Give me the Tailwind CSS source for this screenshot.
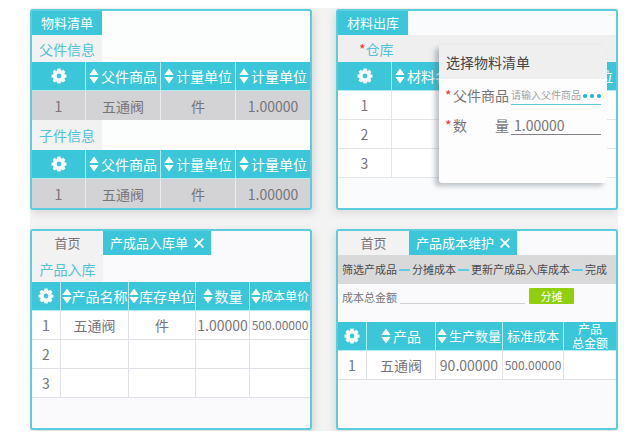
<!DOCTYPE html>
<html lang="zh-CN">
<head>
    <meta charset="UTF-8">
    <meta name="viewport" content="width=device-width, initial-scale=1.0">
    <title>物料管理</title>
    <script src="https://cdn.jsdelivr.net/npm/@tailwindcss/browser@4"></script>
</head>
<body class="bg-white font-['Noto_Sans_CJK_SC',sans-serif] text-sm text-[#77757a]">

<!-- 图标 -->
<svg class="hidden">
    <symbol id="gear" viewBox="0 0 16 16">
        <path fill="currentColor" fill-rule="evenodd" d="M6 2.400 6.400.500h3.200L10 2.400l.8.4 1.600-1.100 2.100 2.200-1.100 1.600.4.900 1.700.3v2.800l-1.700.3-.4.900 1.100 1.600-2.100 2.200-1.600-1.100-.8.4-.4 1.700H6.400L6 13.800l-.8-.4-1.600 1.100-2.100-2.200 1.100-1.600-.4-.9L.500 9.500V6.700l1.700-.3.4-.9-1.100-1.600 2.100-2.200 1.600 1.100zM8 5.600a2.400 2.400 0 1 0 0 4.800 2.400 2.400 0 0 0 0-4.800z"/>
    </symbol>
    <symbol id="sort" viewBox="0 0 10 16">
        <path fill="currentColor" d="M5 .5 9.700 7H.3zM5 15.500.3 9h9.400z"/>
    </symbol>
    <symbol id="close" viewBox="0 0 10 10">
        <path stroke="currentColor" stroke-width="1.800" d="M.6.6l8.800 8.800M9.400.6.600 9.400"/>
    </symbol>
</svg>

<div class="pt-2 pl-[30px] pr-[18px]">
    <main class="grid grid-cols-2 gap-x-6 gap-y-[19px] bg-[#f3f3f4] pt-px pb-px">

        <!-- 物料清单 -->
        <section class="min-h-[201px] rounded-[3px] border-2 border-[#5bcddc] bg-[#fcfdfd] shadow-[2px_3px_8px_#0000001f]">
            <div class="flex h-6">
                <button type="button" class="w-[70px] bg-[#3bc6d9] text-[13px] text-white">物料清单</button>
            </div>
            <h2 class="h-[27px] w-[70px] bg-[#f2f2f3] text-center leading-[29px] text-[#50c3d5]">父件信息</h2>
            <table class="w-full table-fixed border-separate border-spacing-0 text-center whitespace-nowrap [&_td]:h-[29px] [&_td]:border-l [&_td]:border-[#ebebed] [&_td]:bg-[#d3d2d5] [&_td]:p-0 [&_td:first-child]:border-l-0 [&_th]:h-[29px] [&_th]:border-b [&_th]:border-l [&_th]:border-[#b5e8ef] [&_th]:bg-[#3bc6d9] [&_th]:p-0 [&_th]:font-normal [&_th]:text-white [&_th:first-child]:border-l-0">
                <colgroup><col class="w-[53px]"><col class="w-[75px]"><col class="w-[75px]"><col class="w-[75px]"></colgroup>
                <thead>
                    <tr>
                        <th><button type="button" aria-label="设置" class="mx-auto block"><svg class="size-4"><use href="#gear"/></svg></button></th>
                        <th><div class="flex items-center justify-center gap-[2px]"><svg class="h-4 w-[10px] shrink-0"><use href="#sort"/></svg>父件商品</div></th>
                        <th><div class="flex items-center justify-center gap-[2px]"><svg class="h-4 w-[10px] shrink-0"><use href="#sort"/></svg>计量单位</div></th>
                        <th><div class="flex items-center justify-center gap-[2px]"><svg class="h-4 w-[10px] shrink-0"><use href="#sort"/></svg>计量单位</div></th>
                    </tr>
                </thead>
                <tbody>
                    <tr><td>1</td><td>五通阀</td><td>件</td><td>1.00000</td></tr>
                </tbody>
            </table>
            <h2 class="h-[30px] w-[70px] bg-[#f2f2f3] text-center leading-[30px] text-[#50c3d5]">子件信息</h2>
            <table class="w-full table-fixed border-separate border-spacing-0 text-center whitespace-nowrap [&_td]:h-[29px] [&_td]:border-l [&_td]:border-[#ebebed] [&_td]:bg-[#d3d2d5] [&_td]:p-0 [&_td:first-child]:border-l-0 [&_th]:h-[29px] [&_th]:border-b [&_th]:border-l [&_th]:border-[#b5e8ef] [&_th]:bg-[#3bc6d9] [&_th]:p-0 [&_th]:font-normal [&_th]:text-white [&_th:first-child]:border-l-0">
                <colgroup><col class="w-[53px]"><col class="w-[75px]"><col class="w-[75px]"><col class="w-[75px]"></colgroup>
                <thead>
                    <tr>
                        <th><button type="button" aria-label="设置" class="mx-auto block"><svg class="size-4"><use href="#gear"/></svg></button></th>
                        <th><div class="flex items-center justify-center gap-[2px]"><svg class="h-4 w-[10px] shrink-0"><use href="#sort"/></svg>父件商品</div></th>
                        <th><div class="flex items-center justify-center gap-[2px]"><svg class="h-4 w-[10px] shrink-0"><use href="#sort"/></svg>计量单位</div></th>
                        <th><div class="flex items-center justify-center gap-[2px]"><svg class="h-4 w-[10px] shrink-0"><use href="#sort"/></svg>计量单位</div></th>
                    </tr>
                </thead>
                <tbody>
                    <tr><td>1</td><td>五通阀</td><td>件</td><td>1.00000</td></tr>
                </tbody>
            </table>
        </section>

        <!-- 材料出库 -->
        <section class="relative min-h-[201px] rounded-[3px] border-2 border-[#5bcddc] bg-[#fafbfc] shadow-[-2px_3px_8px_#0000001a]">
            <div class="flex h-6">
                <button type="button" class="w-[70px] bg-[#3bc6d9] text-[13px] text-white">材料出库</button>
            </div>
            <h2 class="h-[27px] bg-[#efefef] pl-[21px] leading-[29px] text-[#50c3d5]"><span class="text-red-500">*</span>仓库</h2>
            <table class="w-full table-fixed border-separate border-spacing-0 text-center whitespace-nowrap [&_td]:h-[29px] [&_td]:border-b [&_td]:border-l [&_td]:border-[#e4e4e9] [&_td]:bg-white [&_td]:p-0 [&_td:first-child]:border-l-0 [&_th]:h-[29px] [&_th]:border-b [&_th]:border-l [&_th]:border-[#b5e8ef] [&_th]:bg-[#3bc6d9] [&_th]:p-0 [&_th]:font-normal [&_th]:text-white [&_th:first-child]:border-l-0">
                <colgroup><col class="w-[53px]"><col class="w-[75px]"><col class="w-[75px]"><col class="w-[75px]"></colgroup>
                <thead>
                    <tr>
                        <th><button type="button" aria-label="设置" class="mx-auto block"><svg class="size-4"><use href="#gear"/></svg></button></th>
                        <th><div class="flex items-center justify-center gap-[2px]"><svg class="h-4 w-[10px] shrink-0"><use href="#sort"/></svg>材料名称</div></th>
                        <th></th>
                        <th><div class="flex items-center justify-center gap-[2px]"><svg class="h-4 w-[10px] shrink-0"><use href="#sort"/></svg>计量单位</div></th>
                    </tr>
                </thead>
                <tbody>
                    <tr><td>1</td><td></td><td></td><td></td></tr>
                    <tr><td>2</td><td></td><td></td><td></td></tr>
                    <tr><td>3</td><td></td><td></td><td></td></tr>
                </tbody>
            </table>

            <!-- 选择物料清单弹窗 -->
            <form class="absolute top-[34px] right-[9px] w-[168px] rounded-[3px] bg-[#fdfdfd] pb-12 shadow-[-4px_3px_5px_#5a6a7566]">
                <h3 class="h-[34px] rounded-t-[3px] bg-[#efefef] pl-[7px] leading-[35px] text-[#444]">选择物料清单</h3>
                <div class="flex h-[26px] items-end px-[6px]">
                    <label for="parent" class="flex shrink-0 leading-5"><span class="w-2 text-red-500">*</span>父件商品</label>
                    <div class="ml-[2px] flex h-5 flex-1 items-center border-b border-[#5bcddc] pt-[2px]">
                        <input id="parent" type="text" placeholder="请输入父件商品" class="w-0 flex-1 text-[10px] outline-none placeholder:text-[#a2a2a2]">
                        <button type="button" aria-label="选择" class="flex shrink-0 gap-[3px]">
                            <span class="size-1 rounded-full bg-[#19b4cf]"></span>
                            <span class="size-1 rounded-full bg-[#19b4cf]"></span>
                            <span class="size-1 rounded-full bg-[#19b4cf]"></span>
                        </button>
                    </div>
                </div>
                <div class="flex h-[30px] items-end px-[6px]">
                    <label for="quantity" class="flex w-16 shrink-0 leading-5"><span class="w-2 text-red-500">*</span><span class="flex flex-1 justify-between"><span>数</span><span>量</span></span></label>
                    <input id="quantity" type="text" value="1.00000" class="ml-[2px] h-5 w-0 flex-1 border-b border-[#858085] pl-[3px] outline-none">
                </div>
            </form>
        </section>

        <!-- 产成品入库单 -->
        <section class="min-h-[201px] rounded-[3px] border-2 border-[#5bcddc] bg-[#fafafc] shadow-[2px_3px_8px_#0000001f]">
            <div class="flex h-6 text-[13px]">
                <button type="button" class="w-[71px] bg-[#f2f2f3]">首页</button>
                <div class="flex items-center gap-[6px] bg-[#3bc6d9] px-[7px] text-white">
                    <button type="button">产成品入库单</button>
                    <button type="button" aria-label="关闭"><svg class="size-[10px]"><use href="#close"/></svg></button>
                </div>
            </div>
            <h2 class="h-[27px] w-[71px] bg-[#f2f2f3] text-center leading-[29px] text-[#50c3d5]">产品入库</h2>
            <table class="w-full table-fixed border-separate border-spacing-0 text-center whitespace-nowrap [&_td]:h-[29px] [&_td]:border-b [&_td]:border-l [&_td]:border-[#e0e0e8] [&_td]:bg-white [&_td]:p-0 [&_td:first-child]:border-l-0 [&_th]:h-[29px] [&_th]:border-b [&_th]:border-l [&_th]:border-[#b5e8ef] [&_th]:bg-[#3bc6d9] [&_th]:p-0 [&_th]:font-normal [&_th]:text-white [&_th:first-child]:border-l-0">
                <colgroup><col class="w-[28px]"><col class="w-[68px]"><col class="w-[67px]"><col class="w-[54px]"><col class="w-[61px]"></colgroup>
                <thead>
                    <tr>
                        <th><button type="button" aria-label="设置" class="mx-auto block"><svg class="size-4"><use href="#gear"/></svg></button></th>
                        <th><div class="flex items-center justify-center"><svg class="h-4 w-[10px] shrink-0"><use href="#sort"/></svg>产品名称</div></th>
                        <th><div class="flex items-center justify-center"><svg class="h-4 w-[10px] shrink-0"><use href="#sort"/></svg>库存单位</div></th>
                        <th><div class="flex items-center justify-center gap-[2px]"><svg class="h-4 w-[10px] shrink-0"><use href="#sort"/></svg>数量</div></th>
                        <th><div class="flex items-center justify-center text-xs"><svg class="h-4 w-[10px] shrink-0"><use href="#sort"/></svg>成本单价</div></th>
                    </tr>
                </thead>
                <tbody>
                    <tr><td>1</td><td>五通阀</td><td>件</td><td>1.00000</td><td class="text-xs">500.00000</td></tr>
                    <tr><td>2</td><td></td><td></td><td></td><td></td></tr>
                    <tr><td>3</td><td></td><td></td><td></td><td></td></tr>
                </tbody>
            </table>
        </section>

        <!-- 产品成本维护 -->
        <section class="min-h-[201px] rounded-[3px] border-2 border-[#5bcddc] bg-[#fafafc] shadow-[-2px_3px_8px_#0000001a]">
            <div class="flex h-6 text-[13px]">
                <button type="button" class="w-[71px] bg-[#f2f2f3]">首页</button>
                <div class="flex items-center gap-[6px] bg-[#3bc6d9] px-[7px] text-white">
                    <button type="button">产品成本维护</button>
                    <button type="button" aria-label="关闭"><svg class="size-[10px]"><use href="#close"/></svg></button>
                </div>
            </div>
            <ol class="flex h-[29px] items-center gap-[2px] bg-[#dad9da] pl-1 text-[11px] whitespace-nowrap text-[#4a4a4a]">
                <li>筛选产成品</li>
                <li class="h-[2px] w-[11px] bg-[#5bcddc]"></li>
                <li>分摊成本</li>
                <li class="h-[2px] w-[11px] bg-[#5bcddc]"></li>
                <li>更新产成品入库成本</li>
                <li class="h-[2px] w-[11px] bg-[#5bcddc]"></li>
                <li>完成</li>
            </ol>
            <form class="flex h-[38px] items-start pt-1 pr-[42px] pl-1 text-[11px]">
                <label for="total" class="shrink-0 leading-[18px]">成本总金额</label>
                <input id="total" type="text" class="ml-[3px] h-4 w-0 flex-1 border-b border-[#cfcfd2] outline-none">
                <button type="button" class="ml-1 h-4 w-[45px] rounded-[1px] bg-[#90cf0c] leading-4 text-white">分摊</button>
            </form>
            <table class="w-full table-fixed border-separate border-spacing-0 text-center whitespace-nowrap [&_td]:h-[29px] [&_td]:border-b [&_td]:border-l [&_td]:border-[#e0e0e8] [&_td]:bg-white [&_td]:p-0 [&_td:first-child]:border-l-0 [&_th]:h-[29px] [&_th]:border-b [&_th]:border-l [&_th]:border-[#b5e8ef] [&_th]:bg-[#3bc6d9] [&_th]:p-0 [&_th]:font-normal [&_th]:text-white [&_th:first-child]:border-l-0">
                <colgroup><col class="w-[28px]"><col class="w-[69px]"><col class="w-[67px]"><col class="w-[61px]"><col class="w-[53px]"></colgroup>
                <thead>
                    <tr>
                        <th><button type="button" aria-label="设置" class="mx-auto block"><svg class="size-4"><use href="#gear"/></svg></button></th>
                        <th><div class="flex items-center justify-center gap-[2px]"><svg class="h-4 w-[10px] shrink-0"><use href="#sort"/></svg>产品</div></th>
                        <th><div class="flex items-center justify-center gap-[2px] text-[13px]"><svg class="h-4 w-[10px] shrink-0"><use href="#sort"/></svg>生产数量</div></th>
                        <th class="text-[13px]">标准成本</th>
                        <th class="text-xs leading-[14px]">产品<br>总金额</th>
                    </tr>
                </thead>
                <tbody>
                    <tr><td>1</td><td>五通阀</td><td>90.00000</td><td class="text-xs">500.00000</td><td></td></tr>
                </tbody>
            </table>
        </section>
    </main>
</div>

</body>
</html>
